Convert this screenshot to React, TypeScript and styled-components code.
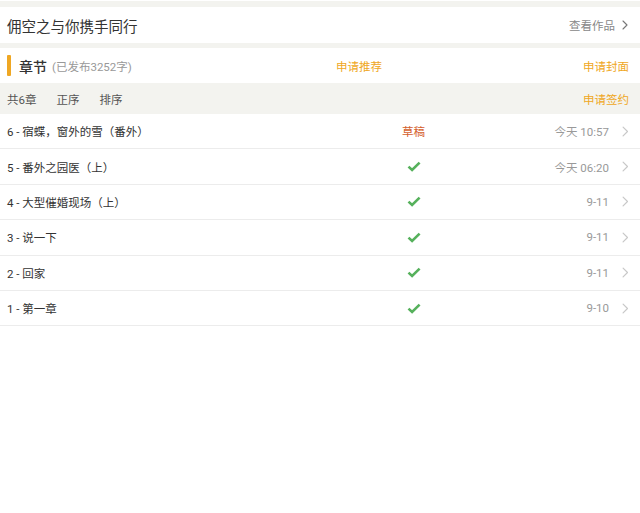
import React from 'react'
import styled, { createGlobalStyle } from 'styled-components'

const GlobalStyle = createGlobalStyle`
    html, body {
        margin: 0;
        padding: 0;
        background: #fff;
        font-family: Roboto, "Noto Sans CJK SC", "Noto Sans", sans-serif;
        color: #333;
    }
    * { box-sizing: border-box; }
`

const ORANGE = '#efa723'
const BAND = '#f3f3ef'

const chapters = [
    { title: '6 - 宿蝶，窗外的雪（番外）', draft: true, date: '今天 10:57' },
    { title: '5 - 番外之园医（上）', draft: false, date: '今天 06:20' },
    { title: '4 - 大型催婚现场（上）', draft: false, date: '9-11' },
    { title: '3 - 说一下', draft: false, date: '9-11' },
    { title: '2 - 回家', draft: false, date: '9-11' },
    { title: '1 - 第一章', draft: false, date: '9-10' },
]

const Chevron = ({ color, size }: { color: string; size: number }) => (
    <svg width={size * 0.6} height={size} viewBox="0 0 6 10" fill="none">
        <path d="M1 1l4 4-4 4" stroke={color} strokeWidth="1.1" strokeLinecap="round" strokeLinejoin="round" />
    </svg>
)

const Check = () => (
    <svg width="14" height="11" viewBox="0 0 14 11">
        <path d="M1.5 5.6l3.6 3.4L12.6 1.6" stroke="#56b15c" strokeWidth="2.6" fill="none" strokeLinejoin="miter" />
    </svg>
)

export default function App() {
    return (
        <Page>
            <GlobalStyle />
            <WorkBar>
                <WorkTitle>佣空之与你携手同行</WorkTitle>
                <WorkLink>
                    查看作品
                    <Chevron color="#777" size={10} />
                </WorkLink>
            </WorkBar>
            <SectionHead>
                <SectionName>
                    <Accent />
                    <strong>章节</strong>
                    <span>(已发布3252字)</span>
                </SectionName>
                <Action>申请推荐</Action>
                <Action $right>申请封面</Action>
            </SectionHead>
            <FilterBar>
                <Filters>
                    <span>共6章</span>
                    <span>正序</span>
                    <span>排序</span>
                </Filters>
                <Action $right>申请签约</Action>
            </FilterBar>
            <List>
                {chapters.map((c, k) => (
                    <Row key={k}>
                        <RowTitle>{c.title}</RowTitle>
                        <Status>{c.draft ? <Draft>草稿</Draft> : <Check />}</Status>
                        <RowDate>{c.date}</RowDate>
                        <Arrow><Chevron color="#c8c8c8" size={11} /></Arrow>
                    </Row>
                ))}
            </List>
        </Page>
    )
}

const Page = styled.div`
    width: 640px;
    min-height: 513px;
    background: #fff;
    padding-top: 1px;
`

const WorkBar = styled.div`
    height: 47px;
    border-top: 6px solid ${BAND};
    border-bottom: 5px solid ${BAND};
    display: flex;
    align-items: center;
    justify-content: space-between;
    padding: 0 12px 0 7px;
`

const WorkTitle = styled.div`
    font-size: 14.5px;
    color: #333;
`

const WorkLink = styled.div`
    display: flex;
    align-items: center;
    gap: 7px;
    font-size: 11.5px;
    color: #888;
`

const SectionHead = styled.div`
    height: 35px;
    display: grid;
    grid-template-columns: 329px 1fr auto;
    align-items: center;
    padding-right: 11px;
`

const SectionName = styled.div`
    display: flex;
    align-items: center;
    strong {
        font-weight: 500;
        font-size: 14px;
        color: #333;
        margin-left: 8px;
    }
    span {
        font-size: 11.5px;
        color: #999;
        margin-left: 5px;
    }
`

const Accent = styled.div`
    width: 4px;
    height: 21px;
    margin-left: 7px;
    background: ${ORANGE};
    border-radius: 1px;
`

const Action = styled.div<{ $right?: boolean }>`
    font-size: 11.5px;
    color: ${ORANGE};
    justify-self: ${p => (p.$right ? 'end' : 'start')};
    padding-left: 7px;
`

const FilterBar = styled.div`
    height: 31px;
    background: ${BAND};
    display: flex;
    align-items: center;
    justify-content: space-between;
    padding: 0 11px 0 7px;
`

const Filters = styled.div`
    display: flex;
    gap: 20px;
    font-size: 11.5px;
    color: #555;
`

const List = styled.div``

const Row = styled.div`
    height: 35.4px;
    display: grid;
    grid-template-columns: 376px 60px 1fr 30px;
    align-items: center;
    padding-left: 7px;
    border-bottom: 1px solid #ececec;
`

const RowTitle = styled.div`
    font-size: 11.5px;
    color: #333;
`

const Status = styled.div`
    display: flex;
    justify-content: center;
    align-items: center;
    padding-left: 1px;
`

const Draft = styled.span`
    font-size: 11.5px;
    color: #d4602c;
`

const RowDate = styled.div`
    text-align: right;
    font-size: 11.5px;
    color: #999;
    padding-right: 1px;
`

const Arrow = styled.div`
    display: flex;
    justify-content: center;
    align-items: center;
`
